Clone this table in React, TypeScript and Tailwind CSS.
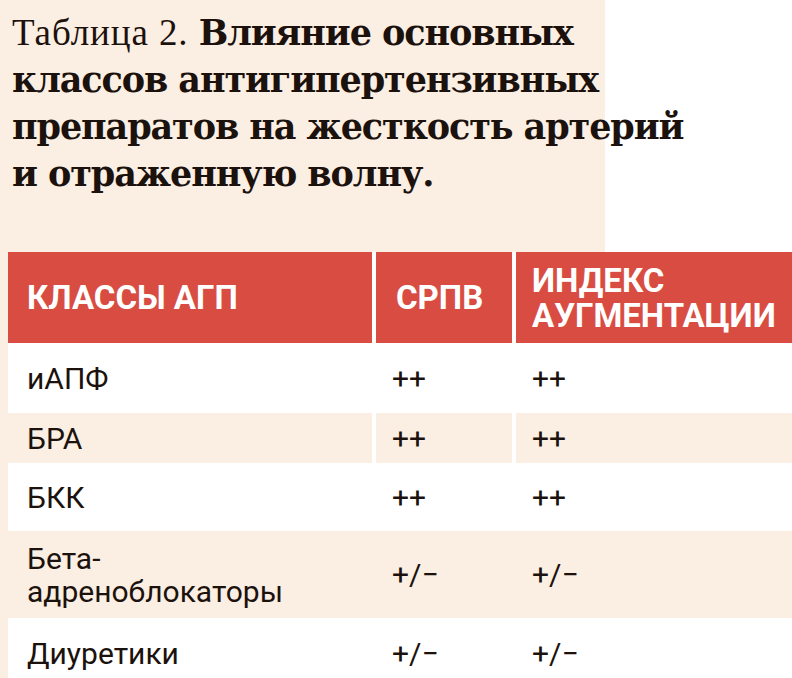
import React from "react"

type Row = {
  name: React.ReactNode
  srpv: string
  index: string
  height: string
  striped: boolean
  split: boolean
}

const rows: Row[] = [
  { name: "иАПФ", srpv: "++", index: "++", height: "h-[70px]", striped: false, split: false },
  { name: "БРА", srpv: "++", index: "++", height: "h-[50px]", striped: true, split: true },
  { name: "БКК", srpv: "++", index: "++", height: "h-[68px]", striped: false, split: false },
  {
    name: (
      <>
        Бета-
        <br />
        адреноблокаторы
      </>
    ),
    srpv: "+/−",
    index: "+/−",
    height: "h-[87px]",
    striped: true,
    split: false,
  },
  { name: "Диуретики", srpv: "+/−", index: "+/−", height: "h-[70px]", striped: false, split: false },
]

export default function App() {
  return (
    <div className="w-[792px] h-[678px] overflow-hidden bg-white text-[#1c120d]">
      {/* заголовок */}
      <div className="w-[605px] h-[252px] bg-[#fbeee3] pl-[12px] pt-[9px]">
        <h1 className="whitespace-nowrap text-[35px] leading-[46px]">
          <span className="font-['Liberation_Serif',serif] font-normal text-[37px] tracking-[0.9px]">Таблица 2. </span>
          <span className="font-['DejaVu_Serif',serif] font-bold tracking-[-1.1px]">
            Влияние основных
            <br />
            классов антигипертензивных
            <br />
            препаратов на жесткость артерий
            <br />
            и отраженную волну.
          </span>
        </h1>
      </div>

      {/* таблица */}
      <div className="border-l-[8px] border-[#fbeee3] font-['Roboto',sans-serif]">
        <div className="grid h-[91px] grid-cols-[364px_136px_276px] gap-x-[4px] bg-white text-white font-bold uppercase text-[33px]">
          <div className="flex items-center bg-[#d94c42] pl-[19px]">Классы АГП</div>
          <div className="flex items-center bg-[#d94c42] pl-[20px]">СРПВ</div>
          <div className="flex items-center bg-[#d94c42] pl-[16px] leading-[35px]">
            Индекс
            <br />
            аугментации
          </div>
        </div>

        {rows.map((row, i) => (
          <div
            key={i}
            className={`grid grid-cols-[364px_136px_276px] gap-x-[4px] text-[30px] leading-[33px] ${row.height} ${
              row.striped && !row.split ? "bg-[#fbeee3]" : "bg-white"
            }`}
          >
            <div className={`flex items-center pl-[19px] ${row.split ? "bg-[#fbeee3]" : ""}`}>{row.name}</div>
            <div className={`flex items-center pl-[16px] ${row.split ? "bg-[#fbeee3]" : ""}`}>{row.srpv}</div>
            <div className={`flex items-center pl-[16px] ${row.split ? "bg-[#fbeee3]" : ""}`}>{row.index}</div>
          </div>
        ))}
      </div>
    </div>
  )
}
